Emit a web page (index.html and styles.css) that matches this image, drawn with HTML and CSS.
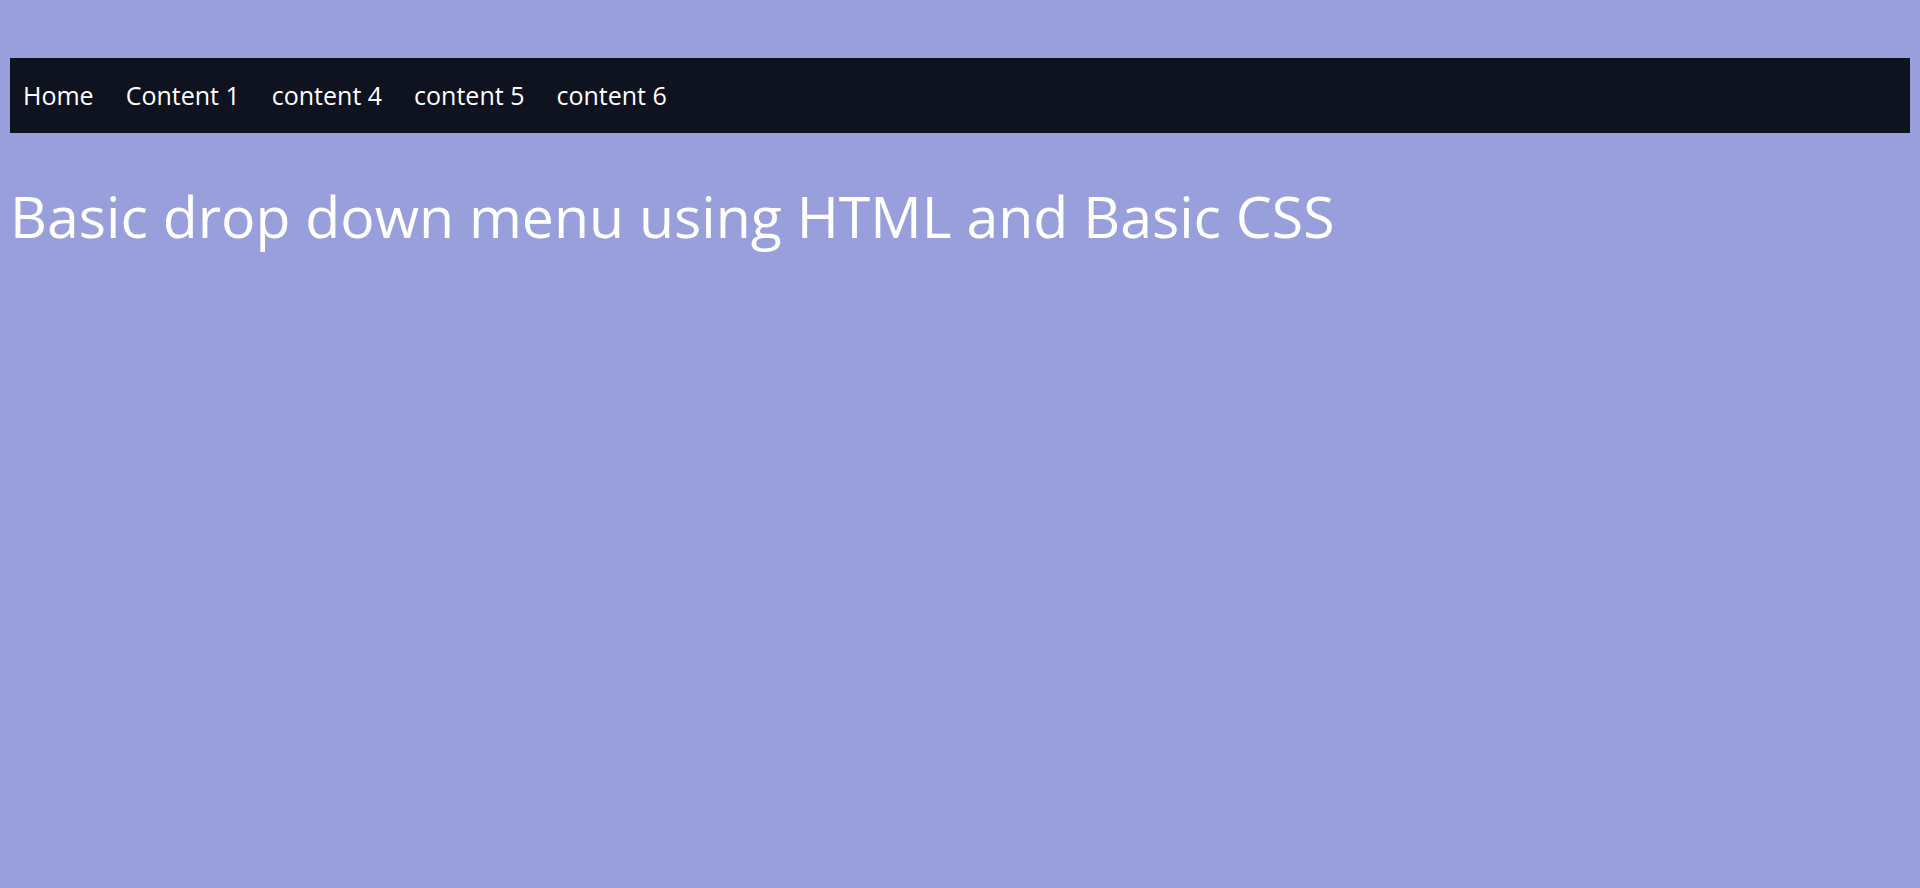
FILE: index.html
```html
<!DOCTYPE html>
<html>
<head>
<meta charset="utf-8">
<link rel="stylesheet" href="styles.css">
</head>
<body>
<nav class="nav">
  <ul class="menu">
    <li class="item"><a href="#">Home</a></li>
    <li class="item"><a href="#">Content 1</a></li>
    <li class="item"><a href="#">content 4</a></li>
    <li class="item"><a href="#">content 5</a></li>
    <li class="item"><a href="#">content 6</a></li>
  </ul>
</nav>
<h1 class="title">Basic drop down menu using HTML and Basic CSS</h1>
</body>
</html>
```
FILE: styles.css
```css
html, body {
  background: #989fdb;
}
body {
  margin: 8px;
  font-family: "Open Sans", sans-serif;
  color: #fff;
}
.nav {
  margin: 50px 2px 0 2px;
  width: 1900px;
  height: 75px;
  background: #0f121f;
  display: flex;
  align-items: center;
}
.menu {
  list-style: none;
  margin: 0 0 2px 0;
  padding: 0 0 0 13px;
  display: flex;
  gap: 32px;
}
.item a {
  color: #fff;
  text-decoration: none;
  font-size: 25px;
}
.title {
  margin: 44px 0 0 2px;
  font-size: 57.2px;
  font-weight: 400;
}
```
